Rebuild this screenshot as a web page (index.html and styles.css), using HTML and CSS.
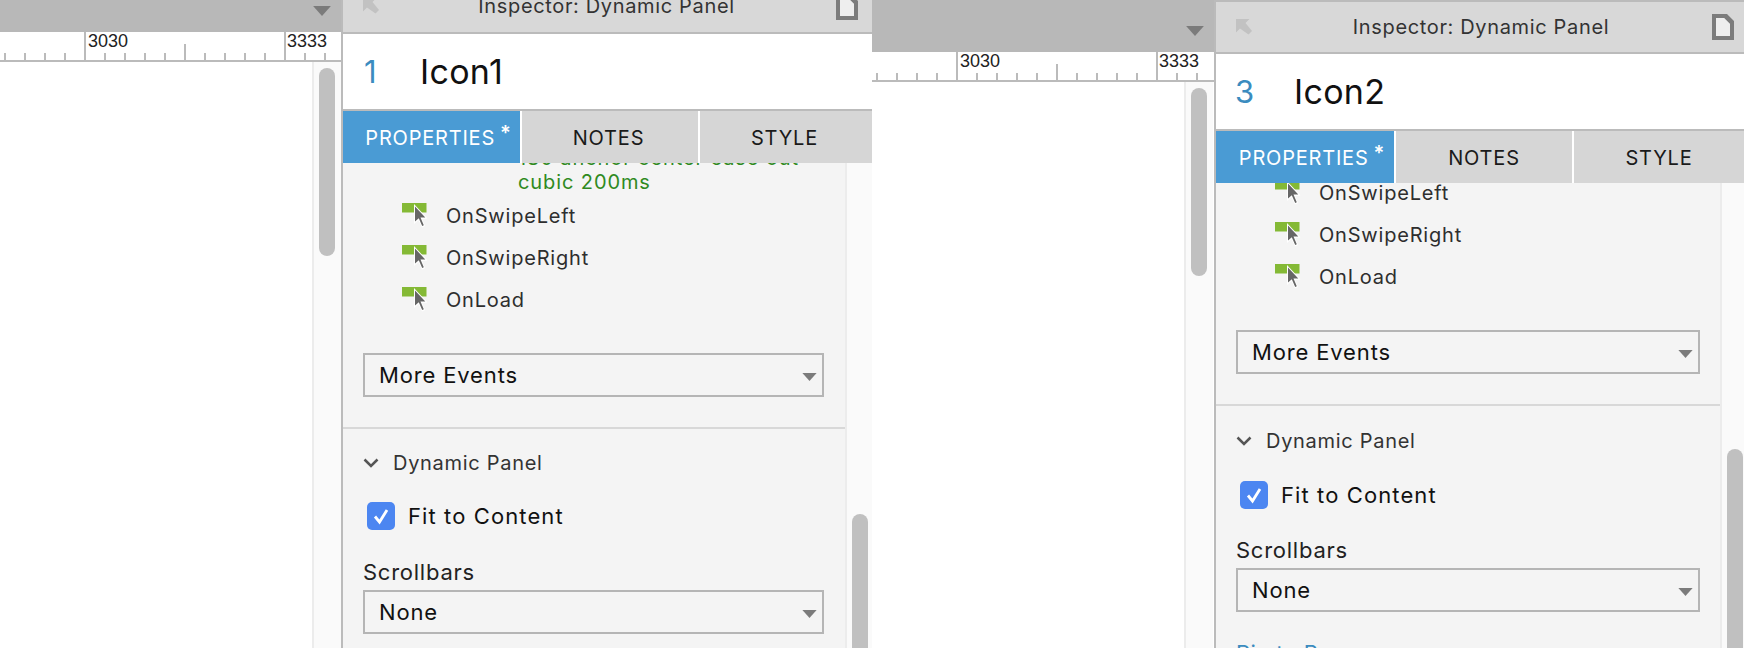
FILE: index.html
```html
<!DOCTYPE html>
<html lang="en">
<head>
<meta charset="utf-8">
<title>Inspector: Dynamic Panel</title>
<link rel="stylesheet" href="styles.css">
</head>
<body>
<svg class="defs" width="0" height="0" aria-hidden="true">
  <symbol id="ev" viewBox="0 0 28 26">
    <rect x="0" y="0" width="24.500" height="9.500" fill="#84b935"/>
    <path d="M12 1 L12 21 L16.500 17 L20 24.500 L23 23 L20 16 L25.500 15.500 Z" fill="#fff"/>
    <path d="M13 3.500 L13 18.500 L16.800 15.200 L20.200 23 L21.800 22.300 L18.500 14.500 L23.300 14.500 Z" fill="#666"/>
  </symbol>
  <symbol id="ruler" viewBox="0 0 344 28">
    <path d="M85 0V28M285 0V28" stroke="#bbb" stroke-width="2" fill="none"/>
    <path d="M185 12V28" stroke="#bbb" stroke-width="2" fill="none"/>
    <path d="M5 21V28M25 21V28M45 21V28M65 21V28M105 21V28M125 21V28M145 21V28M165 21V28M205 21V28M225 21V28M245 21V28M265 21V28M305 21V28M325 21V28" stroke="#bbb" stroke-width="2" fill="none"/>
    <text x="88" y="15" class="ruler-label">3030</text>
    <text x="287" y="15" class="ruler-label">3333</text>
  </symbol>
  <symbol id="caret" viewBox="0 0 16 9"><path d="M0 0H16L8 9Z" fill="#7b7b7b"/></symbol>
  <symbol id="back" viewBox="0 0 16 16"><path d="M0 0H13.500L9.500 4L16 12L12.500 15.500L4 9.500L0 13.500Z" fill="#c2c2c2"/></symbol>
  <symbol id="doc" viewBox="0 0 22 26"><path fill-rule="evenodd" d="M0 0H15L22 7V26H0ZM4 4V22H18V10L12 4Z" fill="#7c7c7c"/><path d="M4 4V22H18V10L12 4Z" fill="#eee"/></symbol>
  <symbol id="chev" viewBox="0 0 16 10"><path d="M1.500 1.500L8 8L14.500 1.500" fill="none" stroke="#555" stroke-width="2.500"/></symbol>
  <symbol id="check" viewBox="0 0 28 28"><rect width="28" height="28" rx="5" fill="#4c86f1"/><path d="M8 14.500L12.500 20L20 8" fill="none" stroke="#fff" stroke-width="2.800"/></symbol>
</svg>

<div class="app">
  <section class="pane pane-a">
    <div class="canvas">
      <div class="topbar"><svg class="topbar-caret"><use href="#caret"/></svg></div>
      <svg class="ruler"><use href="#ruler"/></svg>
      <div class="stage"><div class="strip"><div class="thumb"></div></div></div>
    </div>
    <div class="panel">
      <header class="head">
        <svg class="head-back"><use href="#back"/></svg>
        <span class="head-title">Inspector: Dynamic Panel</span>
        <svg class="head-doc"><use href="#doc"/></svg>
      </header>
      <div class="name"><span class="name-num">1</span><span class="name-text">Icon1</span></div>
      <nav class="tabs">
        <div class="tab tab-on">PROPERTIES<sup class="star">*</sup></div>
        <div class="tab">NOTES</div>
        <div class="tab">STYLE</div>
      </nav>
      <div class="body">
        <div class="content">
          <div class="action">180 anchor center ease out<br>cubic 200ms</div>
          <div class="event"><svg class="event-icon"><use href="#ev"/></svg>OnSwipeLeft</div>
          <div class="event"><svg class="event-icon"><use href="#ev"/></svg>OnSwipeRight</div>
          <div class="event"><svg class="event-icon"><use href="#ev"/></svg>OnLoad</div>
          <div class="select select-first">More Events<svg class="select-caret"><use href="#caret"/></svg></div>
          <div class="divider"></div>
          <div class="section"><svg class="chev"><use href="#chev"/></svg>Dynamic Panel</div>
          <div class="checkline"><svg class="check"><use href="#check"/></svg>Fit to Content</div>
          <div class="label">Scrollbars</div>
          <div class="select">None<svg class="select-caret"><use href="#caret"/></svg></div>
          <div class="link">Pin to Browser</div>
        </div>
        <div class="strip strip-panel"><div class="thumb thumb-panel"></div></div>
      </div>
    </div>
  </section>

  <section class="pane pane-b">
    <div class="canvas">
      <div class="topbar"><svg class="topbar-caret"><use href="#caret"/></svg></div>
      <svg class="ruler"><use href="#ruler"/></svg>
      <div class="stage"><div class="strip"><div class="thumb"></div></div></div>
    </div>
    <div class="panel">
      <header class="head">
        <svg class="head-back"><use href="#back"/></svg>
        <span class="head-title">Inspector: Dynamic Panel</span>
        <svg class="head-doc"><use href="#doc"/></svg>
      </header>
      <div class="name"><span class="name-num">3</span><span class="name-text">Icon2</span></div>
      <nav class="tabs">
        <div class="tab tab-on">PROPERTIES<sup class="star">*</sup></div>
        <div class="tab">NOTES</div>
        <div class="tab">STYLE</div>
      </nav>
      <div class="body">
        <div class="content">
          <div class="event"><svg class="event-icon"><use href="#ev"/></svg>OnSwipeLeft</div>
          <div class="event"><svg class="event-icon"><use href="#ev"/></svg>OnSwipeRight</div>
          <div class="event"><svg class="event-icon"><use href="#ev"/></svg>OnLoad</div>
          <div class="select select-first">More Events<svg class="select-caret"><use href="#caret"/></svg></div>
          <div class="divider"></div>
          <div class="section"><svg class="chev"><use href="#chev"/></svg>Dynamic Panel</div>
          <div class="checkline"><svg class="check"><use href="#check"/></svg>Fit to Content</div>
          <div class="label">Scrollbars</div>
          <div class="select">None<svg class="select-caret"><use href="#caret"/></svg></div>
          <div class="link">Pin to Browser</div>
        </div>
        <div class="strip strip-panel"><div class="thumb thumb-panel"></div></div>
      </div>
    </div>
  </section>
</div>
</body>
</html>
```
FILE: styles.css
```css
* { box-sizing: border-box; }
html, body { margin: 0; height: 648px; overflow: hidden; background: #fff; }
body { font-family: Inter, "Liberation Sans", sans-serif; color: #222; }
.defs { position: absolute; }
.app { display: flex; width: 1744px; height: 648px; }
.pane { display: flex; width: 872px; height: 648px; overflow: hidden; }

/* canvas column */
.canvas { display: flex; flex-direction: column; flex: none; }
.pane-a .canvas { width: 341px; }
.pane-b .canvas { width: 342px; }
.topbar { display: flex; align-items: flex-end; justify-content: flex-end; background: #b8b8b8; }
.pane-a .topbar { height: 32px; padding: 0 10px 16px 0; }
.pane-b .topbar { height: 52px; padding: 0 10px 16px 0; }
.topbar-caret { width: 18px; height: 10px; }
.ruler { display: block; width: 344px; height: 28px; flex: none; }
.ruler-label { font: 18px "Liberation Sans", Arial, sans-serif; fill: #222; }
.stage { flex: 1; display: flex; justify-content: flex-end; border-top: 2px solid #bbb; background: #fff; min-height: 0; }
.pane-b .stage { padding-right: 1px; }
.strip { width: 29px; flex: none; background: #fafafa; border-left: 2px solid #ececec; padding: 6px 0 0 5px; }
.thumb { width: 16px; height: 188px; background: #c0c0c0; border-radius: 8px; }

/* inspector */
.panel { flex: 1; min-width: 0; display: flex; flex-direction: column; border-left: 2px solid #bbb; background: #f4f4f4; }
.head { display: flex; align-items: center; background: #d8d8d8; border-bottom: 2px solid #bbb; flex: none; position: relative; }
.pane-a .head { height: 34px; padding-bottom: 20px; }
.pane-b .head { height: 54px; border-top: 2px solid #bbb; }
.head-back { width: 16px; height: 16px; margin-left: 20px; flex: none; }
.head-title { flex: 1; text-align: center; font-size: 20px; letter-spacing: 0.65px; color: #333; padding-right: 2px; }
.head-doc { width: 22px; height: 26px; margin-right: 10px; flex: none; }
.pane-a .head-doc { margin-right: 14px; margin-top: 2px; }
.name { display: flex; align-items: center; height: 77px; background: #fff; border-bottom: 2px solid #bbb; flex: none; padding-left: 19px; }
.pane-a .name { padding-left: 21px; }
.name-num { width: 59px; font-size: 31px; color: #3b8cbf; }
.pane-a .name-num { width: 56px; }
.name-text { font-size: 34px; letter-spacing: 0.3px; color: #111; }
.tabs { display: flex; height: 52px; flex: none; }
.tab { display: flex; align-items: center; justify-content: center; width: 178px; padding-top: 2px; background: #d6d6d6; border-left: 2px solid #fff; font-size: 20px; letter-spacing: 0.8px; color: #1a1a1a; }
.pane-a .tab { padding-right: 3px; }
.tab:first-child { width: 177px; border-left: 0; }
.pane-b .tab:first-child { width: 178px; }
.tab:last-child { flex: 1; width: auto; }
.tab-on, .pane-a .tab-on { background: #4a9bd4; color: #fff; padding: 2px 0 0 14px; }
.star { font-size: 20px; font-weight: 600; line-height: 1; margin: -10px 0 0 5px; }
.body { flex: 1; min-height: 0; display: flex; overflow: hidden; }
.content { flex: 1; min-width: 0; padding: 0 21px 0 20px; }
.pane-a .content { margin-top: -17px; }
.pane-b .content { margin-top: -11px; padding-right: 20px; }
.action { margin: 0 0 1px 155px; font-size: 20px; line-height: 24px; color: #2f8a1f; white-space: nowrap; letter-spacing: 0.9px; }
.event { display: flex; align-items: center; height: 42px; margin-left: 39px; font-size: 20px; letter-spacing: 0.8px; color: #2e2e2e; }
.event-icon { width: 28px; height: 26px; margin: 0 16px 0 0; flex: none; }
.select { display: flex; align-items: center; justify-content: space-between; height: 44px; border: 2px solid #b5b5b5; padding: 0 5px 0 14px; font-size: 22px; letter-spacing: 0.85px; color: #111; }
.select-first { margin-top: 32px; }
.select-caret { width: 15px; height: 8px; margin-top: 3px; }
.divider { height: 2px; margin: 30px -21px 0 -20px; background: #d8d8d8; }
.pane-b .divider { margin-right: -20px; }
.section { display: flex; align-items: center; height: 22px; margin-top: 23px; font-size: 20px; letter-spacing: 0.7px; color: #333; }
.pane-b .section { margin-top: 24px; }
.chev { width: 16px; height: 10px; margin-right: 14px; flex: none; }
.checkline { display: flex; align-items: center; height: 28px; margin: 28px 0 0 4px; font-size: 22px; letter-spacing: 1.1px; color: #111; }
.pane-b .checkline { margin-top: 29px; }
.check { width: 28px; height: 28px; margin-right: 13px; flex: none; }
.label { height: 24px; margin-top: 30px; font-size: 22px; line-height: 24px; letter-spacing: 0.75px; color: #222; }
.pane-b .label { margin-top: 29px; }
.label + .select { margin-top: 6px; }
.link { margin-top: 28px; font-size: 22px; line-height: 26px; color: #3b8cbf; letter-spacing: 0.4px; }
.strip-panel { padding: 0 0 0 5px; display: flex; flex-direction: column; justify-content: flex-end; }
.pane-a .strip-panel { width: 27px; }
.pane-b .strip-panel { width: 24px; }
.thumb-panel { height: 134px; border-radius: 8px 8px 0 0; }
.pane-b .thumb-panel { height: 199px; }
```
